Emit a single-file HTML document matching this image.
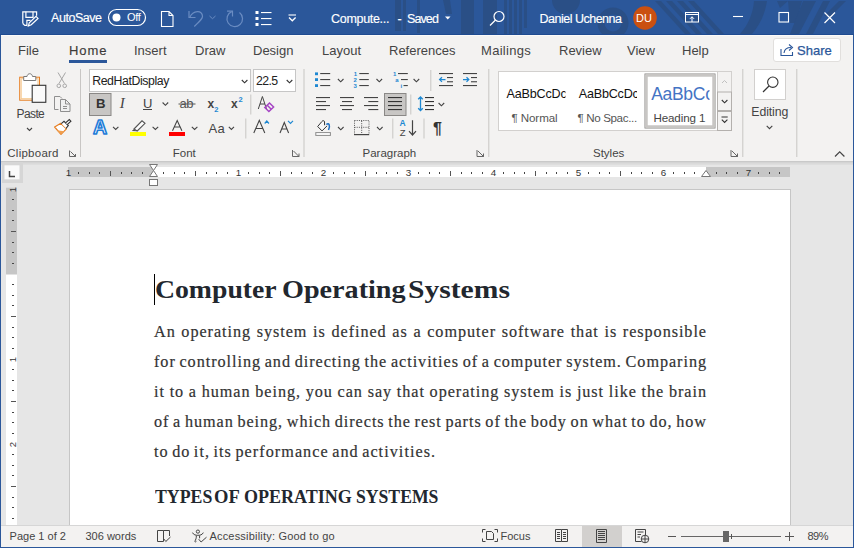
<!DOCTYPE html>
<html><head><meta charset="utf-8">
<style>
*{margin:0;padding:0;box-sizing:border-box}
html,body{width:854px;height:548px;overflow:hidden;background:#e6e6e6;font-family:"Liberation Sans",sans-serif;position:relative}
.a{position:absolute}
.t{position:absolute;white-space:nowrap;line-height:1}
#title{left:0;top:0;width:854px;height:35px;background:#2b579a}
#ribbon{left:0;top:35px;width:854px;height:126px;background:#f3f2f1}
.tab{position:absolute;top:44px;font-size:13px;color:#444;white-space:nowrap;line-height:1}
.sep{position:absolute;width:1px;background:#c8c6c4}
.glabel{position:absolute;top:148px;font-size:11.5px;color:#444;white-space:nowrap;line-height:1}
.chev{position:absolute}
svg{position:absolute;overflow:visible}
.doc{font-family:"Liberation Serif",serif;color:#333}
.bl{position:absolute;-webkit-text-stroke:0.2px #333;font-family:"Liberation Serif",serif;left:154px;width:553px;font-size:16.2px;letter-spacing:0.95px;word-spacing:-1.65px;text-align:justify;text-align-last:justify;white-space:nowrap;line-height:1;color:#333}
</style></head><body>

<!-- TITLE BAR -->
<div id="title" class="a"></div>
<svg class="a" style="left:0;top:0" width="854" height="35" viewBox="0 0 854 35">
 <g fill="#2a4f86">
  <rect x="395" y="0" width="6" height="31"/>
  <rect x="403" y="0" width="3" height="31"/>
  <rect x="417" y="0" width="3" height="33"/>
  <polygon points="443,0 450,0 452,14 446,14"/>
  <rect x="461" y="0" width="13" height="35"/>
  <rect x="483" y="0" width="14" height="35"/>
  <rect x="504" y="0" width="3" height="35"/>
  <rect x="509" y="0" width="3" height="35"/>
  <rect x="514" y="0" width="3" height="35"/>
  <rect x="519" y="0" width="3" height="35"/>
  <rect x="524" y="0" width="3" height="28"/>
  <path d="M552 0 A14 14 0 0 0 580 0 Z"/>
  <path fill-rule="evenodd" d="M597.5 23 A15.5 15.5 0 1 0 628.5 23 A15.5 15.5 0 1 0 597.5 23 Z M604.5 23 A8.5 8.5 0 1 0 621.5 23 A8.5 8.5 0 1 0 604.5 23 Z"/>
  <polygon points="655,1 661,1 691,34 685,34"/>
  <polygon points="666,1 672,1 702,34 696,34"/>
  <polygon points="677,1 683,1 713,34 707,34"/>
  <polygon points="688,1 694,1 724,34 718,34"/>
  <path d="M754 1 L767 1 C765 14 760 25 752 34 L740 34 C748 25 753 14 754 1 Z"/>
  <polygon points="777,1 788,1 780,8"/>
  <polygon points="788,1 802,1 796,23 790,23"/>
  <polygon points="803,1 816,1 799,34 790,34"/>
  <polygon points="823,1 830,1 813,34 806,34"/>
  <polygon points="839,1 846,1 831,16 824,16"/>
 </g>
 <rect x="0" y="34" width="854" height="1" fill="#1f4b90"/>
 <!-- save icon -->
 <g fill="none" stroke="#fff" stroke-width="1.2">
  <path d="M22.8 23.5 V11.8 H36.6 V15.8"/>
  <path d="M22.8 23.5 L24.8 25.4 H26.9 V20.4 H30.5"/>
  <path d="M25.9 11.8 V17.4 H33 V11.8"/>
  <path d="M28.4 25.9 L29.3 22.7 L36 16.4 L38 18.4 L31.3 24.8 Z"/>
 </g>
 <!-- toggle -->
 <rect x="108.5" y="9.5" width="37" height="16" rx="8" fill="none" stroke="#fff" stroke-width="1.2"/>
 <circle cx="116.5" cy="17.5" r="4" fill="#fff"/>
 <!-- new doc icon -->
 <path d="M161.5 11.5 H169 L173 15.5 V26.5 H161.5 Z M169 11.5 V15.5 H173" fill="none" stroke="#fff" stroke-width="1.1"/>
 <!-- undo (dim) -->
 <g fill="none" stroke="#6a8cc2" stroke-width="1.2">
  <path d="M189 11 V17.5 H195.5"/>
  <path d="M189.8 17.2 C193 10.5 202.5 9.5 202.5 16.5 C202.5 18.5 201 20 194.3 26.5"/>
  <path d="M209.5 16 L212.5 18.7 L215.5 16" stroke-width="1"/>
  <path d="M239.5 12.6 A7.8 7.8 0 1 1 231.7 11.6"/>
  <path d="M227 11.1 H232.5 V16.5"/>
 </g>
 <!-- list icon -->
 <g fill="#fff">
  <rect x="255.5" y="11" width="3" height="3"/>
  <rect x="255.5" y="17" width="3" height="3"/>
  <rect x="255.5" y="23" width="3" height="3"/>
  <rect x="261" y="12" width="10.5" height="1.1"/>
  <rect x="261" y="18" width="10.5" height="1.1"/>
  <rect x="261" y="24" width="10.5" height="1.1"/>
 </g>
 <!-- customize -->
 <path d="M288.5 15 H296" stroke="#fff" stroke-width="1.1"/>
 <path d="M289 17.5 L292.3 20.8 L295.6 17.5" fill="none" stroke="#fff" stroke-width="1.3"/>
 <!-- saved dropdown -->
 <path d="M445 16.5 L450.5 16.5 L447.75 19.5 Z" fill="#fff"/>
 <!-- search -->
 <circle cx="499" cy="16.5" r="5" fill="none" stroke="#fff" stroke-width="1.2"/>
 <path d="M495.5 20 L490 25.5" stroke="#fff" stroke-width="1.3"/>
 <!-- avatar -->
 <circle cx="645" cy="18" r="11.8" fill="#ca5010"/>
 <!-- ribbon display -->
 <g fill="none" stroke="#fff" stroke-width="1">
  <rect x="685.5" y="12.5" width="13" height="9.5"/>
  <path d="M685.5 14.5 H698.5"/>
  <path d="M692 22 V16.8 M690 18.8 L692 16.8 L694 18.8"/>
 </g>
 <!-- window controls -->
 <path d="M733 16.5 H743" stroke="#fff" stroke-width="1.1"/>
 <rect x="779" y="12.5" width="9.5" height="9.5" fill="none" stroke="#fff" stroke-width="1.1"/>
 <path d="M824.5 12.5 L835 23 M835 12.5 L824.5 23" stroke="#fff" stroke-width="1.2"/>
</svg>
<div class="t" style="left:51px;top:12.4px;font-size:12.5px;letter-spacing:-0.45px;color:#fff;-webkit-text-stroke:0.15px #fff">AutoSave</div>
<div class="t" style="left:127px;top:11.8px;font-size:11px;letter-spacing:-0.3px;color:#fff">Off</div>
<div class="t" style="left:331px;top:12.8px;font-size:12.5px;letter-spacing:-0.3px;color:#fff;-webkit-text-stroke:0.15px #fff">Compute...</div><div class="t" style="left:397.5px;top:12.8px;font-size:12.5px;color:#fff;-webkit-text-stroke:0.15px #fff">-</div><div class="t" style="left:407px;top:12.8px;font-size:12.5px;letter-spacing:-0.9px;color:#fff;-webkit-text-stroke:0.15px #fff">Saved</div>
<div class="t" style="left:539.5px;top:12.8px;font-size:12.5px;letter-spacing:-0.5px;color:#fff;-webkit-text-stroke:0.15px #fff">Daniel Uchenna</div>
<div class="t" style="left:636px;top:13px;font-size:11px;color:#fff">DU</div>


<!-- RIBBON -->
<div id="ribbon" class="a"></div>
<div class="a" style="left:1px;top:35px;width:852px;height:1px;background:#fbfaf9"></div>
<div class="tab" style="left:18px">File</div>
<div class="tab" style="left:69px;color:#3b3a39;letter-spacing:0.9px;-webkit-text-stroke:0.15px #3b3a39">Home</div>
<div class="a" style="left:69px;top:60px;width:38px;height:3px;background:#2b579a"></div>
<div class="tab" style="left:134px">Insert</div>
<div class="tab" style="left:195px">Draw</div>
<div class="tab" style="left:253px">Design</div>
<div class="tab" style="left:322px">Layout</div>
<div class="tab" style="left:389px">References</div>
<div class="tab" style="left:481px;letter-spacing:0.3px">Mailings</div>
<div class="tab" style="left:559px">Review</div>
<div class="tab" style="left:627px">View</div>
<div class="tab" style="left:682px">Help</div>
<div class="a" style="left:773px;top:38px;width:68px;height:24px;background:#fff;border:1px solid #e1dfdd;border-radius:3px"></div>
<div class="t" style="left:797px;top:44px;font-size:13px;color:#2b579a;-webkit-text-stroke:0.25px #2b579a">Share</div>
<svg style="left:0;top:0" width="854" height="548">
 <path d="M781 49 V55.5 H792.5 V52" fill="none" stroke="#2b579a" stroke-width="1.1"/>
 <path d="M784 53 C784.5 49 787 47.5 791 47.5" fill="none" stroke="#2b579a" stroke-width="1.1"/>
 <path d="M789 44.5 L792.5 47.5 L789 50.5" fill="none" stroke="#2b579a" stroke-width="1.1"/>
</svg>


<!-- CLIPBOARD GROUP -->
<svg style="left:0;top:0" width="854" height="548">
 <rect x="19.7" y="77.2" width="19.8" height="23" fill="#fdf6ec" stroke="#e67e22" stroke-width="1"/>
 <rect x="21.2" y="78.7" width="16.8" height="20" fill="#fff" stroke="#f6c88f" stroke-width="1"/>
 <path d="M23.7 80.5 V76.5 H27 C27.5 72.8 32 72.8 32.5 76.5 H35.8 V80.5 Z" fill="#fff" stroke="#7a7a7a" stroke-width="1"/>
 <rect x="32.2" y="85.3" width="13.6" height="17" fill="#fafafa" stroke="#333" stroke-width="1.1"/>
 <path d="M27 128 L29.5 130.5 L32 128" fill="none" stroke="#444" stroke-width="1.1"/>
 <g fill="none" stroke="#a6a6a6" stroke-width="1">
  <path d="M58 72.5 L64.5 83.5 M65.5 72.5 L59 83.5"/>
  <circle cx="58.8" cy="85.8" r="1.8"/><circle cx="64.7" cy="85.8" r="1.8"/>
  <path d="M58.5 109.5 H54.5 V96.5 H60 L62 98.5" stroke="#8f8f8f"/>
  <path d="M60.5 99.5 H65.5 L70 104 V111.5 H60.5 Z" fill="#f0f0f0" stroke="#8f8f8f"/>
  <path d="M65.5 99.5 V104 H70 M63 106.5 H67 M63 108.5 H67" stroke="#8f8f8f"/>
 </g>
 <path d="M54.6 127 L60.8 123.3 L66.4 128.9 L61 134.3 Z" fill="#fff" stroke="#e67e22" stroke-width="1.2" stroke-linejoin="round"/>
 <path d="M56.8 130.2 L61 134.3 L64.2 131.2 Z" fill="#f0a050"/>
 <path d="M61.3 123.6 L64 121.3 L68.3 125.6 L66 128.3" fill="#fff" stroke="#333" stroke-width="1.1"/>
 <path d="M65.6 122.8 L69.3 119.6 L70.9 121.2 L67.2 124.6" fill="#fff" stroke="#333" stroke-width="1.1"/>
 <path d="M69.5 150.5 V156.5 H75.5 M70.5 151.5 L75.5 156.5 M73 156.5 H75.5 V154" fill="none" stroke="#666" stroke-width="1"/>
 <rect x="80" y="69" width="1" height="88" fill="#c8c6c4"/>
</svg>
<div class="t" style="left:16.5px;top:107.8px;font-size:12px;letter-spacing:-0.6px;color:#444">Paste</div>
<div class="glabel" style="left:7.3px;letter-spacing:0.25px">Clipboard</div>

<!-- FONT GROUP -->
<svg style="left:0;top:0" width="854" height="548" font-family="Liberation Sans">
 <rect x="89.5" y="69.5" width="161" height="22" fill="#fff" stroke="#c6c6c6" stroke-width="1"/>
 <rect x="253.5" y="69.5" width="42" height="22" fill="#fff" stroke="#c6c6c6" stroke-width="1"/>
 <text x="92.2" y="85.3" font-size="12.3" fill="#222" letter-spacing="-0.4">RedHatDisplay</text>
 <text x="256" y="85.3" font-size="12.3" fill="#222" letter-spacing="-0.6">22.5</text>
 <g fill="none" stroke="#333" stroke-width="1.1">
  <path d="M241.8 80 L244.6 82.8 L247.4 80"/>
  <path d="M286.7 80 L289.5 82.8 L292.3 80"/>
 </g>
 <!-- row 2 -->
 <rect x="89.5" y="93.5" width="21.5" height="22" fill="#c8c6c4" stroke="#8a8886" stroke-width="1"/>
 <text x="96" y="107.8" font-size="13.2" font-weight="bold" fill="#333">B</text>
 <text x="119.8" y="108.2" font-size="15" font-style="italic" font-family="Liberation Serif" fill="#444">I</text>
 <text x="143" y="107.8" font-size="13" fill="#444">U</text>
 <rect x="143" y="109" width="9" height="1" fill="#444"/>
 <text x="179.5" y="107.8" font-size="13" fill="#555" letter-spacing="-0.5">ab</text>
 <rect x="178.5" y="103.5" width="17" height="1" fill="#555"/>
 <text x="207.5" y="107.8" font-size="12" font-weight="bold" fill="#444">x</text>
 <text x="214.3" y="111.8" font-size="7.5" font-weight="bold" fill="#1e88d2">2</text>
 <text x="231" y="107.8" font-size="12" font-weight="bold" fill="#444">x</text>
 <text x="238.5" y="101.6" font-size="7.5" font-weight="bold" fill="#1e88d2">2</text>
 <rect x="250.3" y="94.5" width="1" height="20" fill="#c8c6c4"/>
 <path d="M258.3 109 L262.4 96.5 L266.5 109 M260 104 H264.8" fill="none" stroke="#444" stroke-width="1"/>
 <path d="M264.8 107.5 L269.5 103 L273.6 107 L268.9 111.5 Z M267.2 105.3 L271.3 109.3" fill="none" stroke="#a544c4" stroke-width="1.5"/>
 <g fill="none" stroke="#444" stroke-width="1.1">
  <path d="M162.6 102.5 L165.4 105.3 L168.2 102.5"/>
  <path d="M113 126.8 L115.7 129.5 L118.4 126.8"/>
  <path d="M152.6 126.8 L155.4 129.5 L158.2 126.8"/>
  <path d="M191.8 126.8 L194.6 129.5 L197.4 126.8"/>
  <path d="M228.8 126.8 L231.4 129.4 L234 126.8"/>
 </g>
 <!-- row 3 -->
 <text x="93" y="134" font-size="19.5" font-weight="bold" fill="#fff" stroke="#1e7cd8" stroke-width="1.6" stroke-linejoin="round">A</text>
 <path d="M134 129 L142 120.8 L145 123.3 L137.2 131 Z" fill="#fff" stroke="#555" stroke-width="1.1"/>
 <path d="M131.8 131 L134 129 L136.8 131.2 Z" fill="#555"/>
 <rect x="130" y="132" width="16" height="4" fill="#ffff00"/>
 <path d="M172.5 130.8 L177.2 120.5 L181.9 130.8 M174.2 127 H180.2" fill="none" stroke="#444" stroke-width="1.1"/>
 <rect x="169" y="132" width="16" height="4" fill="#f00"/>
 <text x="208.5" y="133" font-size="13" fill="#444" letter-spacing="0.4">Aa</text>
 <rect x="245.3" y="118.5" width="1" height="20" fill="#c8c6c4"/>
 <path d="M253.8 133 L259.3 120.3 L264.8 133 M255.8 128.5 H262.8" fill="none" stroke="#444" stroke-width="1.1"/>
 <path d="M264.7 123.5 L266.8 121 L268.9 123.5" fill="none" stroke="#1e88d2" stroke-width="1.2"/>
 <path d="M280 133 L284.3 122.5 L288.6 133 M281.7 129 H287" fill="none" stroke="#444" stroke-width="1.1"/>
 <path d="M288 120.8 L290.5 123.3 L293 120.8" fill="none" stroke="#1e88d2" stroke-width="1.2"/>
 <path d="M292.5 150 V156.5 H299 M293.5 151 L299 156.5 M296.5 156.5 H299 V153.5" fill="none" stroke="#666" stroke-width="1"/>
 <rect x="303.5" y="69" width="1" height="88" fill="#c8c6c4"/>
</svg>
<div class="glabel" style="left:172.8px;">Font</div>

<!-- PARAGRAPH GROUP -->
<svg style="left:0;top:0" width="854" height="548" font-family="Liberation Sans">
 <g fill="#1e88d2">
  <rect x="315" y="72.4" width="3" height="2.8"/><rect x="315" y="78.2" width="3" height="2.8"/><rect x="315" y="84.2" width="3" height="2.8"/>
 </g>
 <g fill="#444">
  <rect x="320.2" y="73" width="10" height="1.1"/><rect x="320.2" y="79" width="10" height="1.1"/><rect x="320.2" y="85" width="10" height="1.1"/>
  <rect x="359.3" y="73" width="9.5" height="1.1"/><rect x="359.3" y="79" width="9.5" height="1.1"/><rect x="359.3" y="85" width="9.5" height="1.1"/>
  <rect x="398" y="73" width="9.8" height="1.1"/><rect x="401" y="79" width="6.8" height="1.1"/><rect x="403.5" y="85" width="4.3" height="1.1"/>
 </g>
 <g font-size="6" font-weight="bold" fill="#1e88d2">
  <text x="353.7" y="75.5">1</text><text x="353.5" y="81.5">2</text><text x="353.5" y="87.5">3</text>
  <text x="393" y="75.5">1</text><text x="395.2" y="82">a</text><text x="400.5" y="87.8">i</text>
 </g>
 <g fill="none" stroke="#444" stroke-width="1.1">
  <path d="M337.9 79 L340.7 81.8 L343.5 79"/>
  <path d="M376.5 79 L379.3 81.8 L382.1 79"/>
  <path d="M413.6 79 L416.4 81.8 L419.2 79"/>
  <path d="M438.6 103 L441.4 105.8 L444.2 103"/>
  <path d="M338 127 L340.8 129.8 L343.6 127"/>
  <path d="M377 127 L379.8 129.8 L382.6 127"/>
 </g>
 <rect x="430.3" y="70" width="1" height="21" fill="#c8c6c4"/>
 <g fill="#444">
  <rect x="439" y="73" width="14" height="1.1"/><rect x="447" y="77" width="6" height="1.1"/><rect x="447" y="81.2" width="6" height="1.1"/><rect x="439" y="85" width="14" height="1.1"/>
  <rect x="463" y="73" width="14" height="1.1"/><rect x="471" y="77" width="6" height="1.1"/><rect x="471" y="81.2" width="6" height="1.1"/><rect x="463" y="85" width="14" height="1.1"/>
 </g>
 <g fill="none" stroke="#1e88d2" stroke-width="1.3">
  <path d="M439.3 79.6 H445.5 M442 77.3 L439.6 79.6 L442 81.9"/>
  <path d="M463 79.6 H469 M466.5 77.3 L468.8 79.6 L466.5 81.9"/>
  <path d="M420.5 97 V110.5 M418.2 99.3 L420.5 97 L422.8 99.3 M418.2 108.2 L420.5 110.5 L422.8 108.2"/>
 </g>
 <!-- align row -->
 <g fill="#444">
  <rect x="316" y="97" width="14" height="1.1"/><rect x="316" y="101" width="10" height="1.1"/><rect x="316" y="105" width="14" height="1.1"/><rect x="316" y="109" width="10" height="1.1"/>
  <rect x="340" y="97" width="14" height="1.1"/><rect x="342" y="101" width="10" height="1.1"/><rect x="340" y="105" width="14" height="1.1"/><rect x="342" y="109" width="10" height="1.1"/>
  <rect x="364" y="97" width="14" height="1.1"/><rect x="368.3" y="101" width="10" height="1.1"/><rect x="364" y="105" width="14" height="1.1"/><rect x="368.3" y="109" width="10" height="1.1"/>
 </g>
 <rect x="384.5" y="93.5" width="21.5" height="22" fill="#c8c6c4" stroke="#8a8886" stroke-width="1"/>
 <g fill="#333">
  <rect x="388" y="97" width="14" height="1.1"/><rect x="388" y="101" width="14" height="1.1"/><rect x="388" y="105" width="14" height="1.1"/><rect x="388" y="109" width="14" height="1.1"/>
  <rect x="425" y="97" width="9" height="1.1"/><rect x="425" y="101" width="9" height="1.1"/><rect x="425" y="105" width="9" height="1.1"/><rect x="425" y="109" width="9" height="1.1"/>
 </g>
 <rect x="410.3" y="94.5" width="1" height="20" fill="#c8c6c4"/>
 <!-- row 3 -->
 <path d="M317.7 126.5 L321.8 121.6 C322.6 120.3 324.4 120.4 324.5 121.8 L324.6 125.2 M317.7 126.5 L322 130.9 L327 125.9 M321.8 121.6" fill="#fafafa" stroke="#333" stroke-width="1"/>
 <path d="M326.4 124.6 C328.8 122.3 330.6 125 328.5 130" fill="none" stroke="#1e6fc2" stroke-width="1.5"/>
 <rect x="315.8" y="132.6" width="14.6" height="2.8" fill="#fff" stroke="#8a8a8a" stroke-width="1"/>
 <g fill="#444">
  <rect x="354" y="134" width="15.2" height="1.2"/>
 </g>
 <path d="M354.5 120.5 H369 V134 M354.5 120.5 V134 M361.7 121 V134 M354.5 127.3 H369" fill="none" stroke="#555" stroke-width="1" stroke-dasharray="1 1.2"/>
 <rect x="392.3" y="118.5" width="1" height="20" fill="#c8c6c4"/>
 <text x="399.5" y="126.3" font-size="8.5" font-weight="bold" fill="#1e88d2">A</text>
 <text x="399.7" y="135.8" font-size="9.5" fill="#444">Z</text>
 <path d="M412.5 120.3 V135 M409 131.2 L412.5 135 L416 131.2" fill="none" stroke="#444" stroke-width="1.2"/>
 <rect x="423.5" y="118.5" width="1" height="20" fill="#c8c6c4"/>
 <text x="433" y="133.8" font-size="16" font-weight="bold" fill="#333">¶</text>
 <path d="M477 150 V156.5 H483.5 M478 151 L483.5 156.5 M480.5 156.5 H483.5 V153.5" fill="none" stroke="#666" stroke-width="1"/>
 <rect x="488.3" y="69" width="1" height="88" fill="#c8c6c4"/>
</svg>
<div class="glabel" style="left:362.5px;">Paragraph</div>

<!-- STYLES GROUP -->
<svg style="left:0;top:0" width="854" height="548" font-family="Liberation Sans">
 <rect x="498.5" y="71.5" width="233" height="59" fill="#fff" stroke="#d2d0ce" stroke-width="1"/>
 <rect x="717.5" y="71.5" width="14" height="59" fill="#f3f2f1" stroke="#d2d0ce" stroke-width="1"/>
 <rect x="717.5" y="92" width="14" height="18.5" fill="#f3f2f1" stroke="#b3b0ad" stroke-width="1"/>
 <rect x="717.5" y="111.5" width="14" height="19" fill="#f3f2f1" stroke="#b3b0ad" stroke-width="1"/>
 <path d="M722 83 L724.5 80.5 L727 83" fill="none" stroke="#c0c0c0" stroke-width="1"/>
 <path d="M721.8 100 L724.6 102.8 L727.4 100" fill="none" stroke="#333" stroke-width="1.1"/>
 <path d="M721.5 117 H727.7 M721.8 119.6 L724.6 122.4 L727.4 119.6" fill="none" stroke="#333" stroke-width="1.1"/>
 <rect x="645" y="74" width="70" height="54" fill="#fff" stroke="#8a8886" stroke-width="1"/>
 <rect x="646.5" y="75.5" width="67" height="51" fill="none" stroke="#c8c6c4" stroke-width="2.5"/>
 <svg x="498" y="72" width="67.5" height="40" style="overflow:hidden"><text x="8.6" y="26.1" font-size="12.6" fill="#111" letter-spacing="-0.2">AaBbCcDc</text></svg>
 <svg x="570" y="72" width="67" height="40" style="overflow:hidden"><text x="8.7" y="26.1" font-size="12.6" fill="#111" letter-spacing="-0.2">AaBbCcDc</text></svg>
 <svg x="648" y="77" width="61.5" height="30" style="overflow:hidden"><text x="3.2" y="22.8" font-size="17.5" fill="#4474c4" letter-spacing="-0.3">AaBbCc</text></svg>
 <text x="511.5" y="121.9" font-size="11.6" fill="#555" letter-spacing="-0.1">¶ Normal</text>
 <text x="577.4" y="121.9" font-size="11.6" fill="#555" letter-spacing="-0.35">¶ No Spac...</text>
 <text x="653.4" y="121.9" font-size="11.6" fill="#444" letter-spacing="-0.1">Heading 1</text>
 <path d="M731 150 V156.5 H737.5 M732 151 L737.5 156.5 M734.5 156.5 H737.5 V153.5" fill="none" stroke="#666" stroke-width="1"/>
 <rect x="742.3" y="69" width="1" height="88" fill="#c8c6c4"/>
 <!-- editing -->
 <rect x="754.5" y="69.5" width="31" height="30" fill="#fff" stroke="#d2d0ce" stroke-width="1"/>
 <circle cx="772.8" cy="82.2" r="5.2" fill="none" stroke="#333" stroke-width="1.1"/>
 <path d="M769 86 L763 92" stroke="#333" stroke-width="1.2"/>
 <path d="M766.7 125.8 L769.5 128.6 L772.3 125.8" fill="none" stroke="#444" stroke-width="1.1"/>
 <rect x="796.3" y="69" width="1" height="88" fill="#c8c6c4"/>
 <path d="M835 156.5 L839.7 151.8 L844.4 156.5" fill="none" stroke="#444" stroke-width="1.2"/>
</svg>
<div class="glabel" style="left:593px;">Styles</div>
<div class="t" style="left:751.3px;top:105.5px;font-size:12.3px;color:#444;letter-spacing:-0.1px">Editing</div>

<!-- RULER AREA -->
<svg style="left:0;top:0" width="854" height="548" font-family="Liberation Sans">
 <rect x="0" y="161" width="854" height="1" fill="#c9c9c9"/>
 <rect x="0" y="162" width="854" height="1" fill="#d4d4d4"/>
 <rect x="0" y="163" width="854" height="1" fill="#dadada"/>
 <rect x="0" y="164" width="854" height="1" fill="#dedede"/>
 <rect x="68" y="167" width="722" height="10" fill="#c6c6c6"/>
 <rect x="153.5" y="167" width="552.5" height="10" fill="#fff"/>
 <rect x="78" y="172" width="1" height="2" fill="#444"/>
 <rect x="89" y="172" width="1" height="2" fill="#444"/>
 <rect x="99" y="172" width="1" height="2" fill="#444"/>
 <rect x="110" y="171" width="1" height="5" fill="#555"/>
 <rect x="121" y="172" width="1" height="2" fill="#444"/>
 <rect x="131" y="172" width="1" height="2" fill="#444"/>
 <rect x="142" y="172" width="1" height="2" fill="#444"/>
 <rect x="163" y="172" width="1" height="2" fill="#444"/>
 <rect x="174" y="172" width="1" height="2" fill="#444"/>
 <rect x="184" y="172" width="1" height="2" fill="#444"/>
 <rect x="195" y="171" width="1" height="5" fill="#555"/>
 <rect x="206" y="172" width="1" height="2" fill="#444"/>
 <rect x="216" y="172" width="1" height="2" fill="#444"/>
 <rect x="227" y="172" width="1" height="2" fill="#444"/>
 <rect x="248" y="172" width="1" height="2" fill="#444"/>
 <rect x="259" y="172" width="1" height="2" fill="#444"/>
 <rect x="269" y="172" width="1" height="2" fill="#444"/>
 <rect x="280" y="171" width="1" height="5" fill="#555"/>
 <rect x="291" y="172" width="1" height="2" fill="#444"/>
 <rect x="301" y="172" width="1" height="2" fill="#444"/>
 <rect x="312" y="172" width="1" height="2" fill="#444"/>
 <rect x="333" y="172" width="1" height="2" fill="#444"/>
 <rect x="344" y="172" width="1" height="2" fill="#444"/>
 <rect x="354" y="172" width="1" height="2" fill="#444"/>
 <rect x="365" y="171" width="1" height="5" fill="#555"/>
 <rect x="376" y="172" width="1" height="2" fill="#444"/>
 <rect x="386" y="172" width="1" height="2" fill="#444"/>
 <rect x="397" y="172" width="1" height="2" fill="#444"/>
 <rect x="418" y="172" width="1" height="2" fill="#444"/>
 <rect x="429" y="172" width="1" height="2" fill="#444"/>
 <rect x="439" y="172" width="1" height="2" fill="#444"/>
 <rect x="450" y="171" width="1" height="5" fill="#555"/>
 <rect x="461" y="172" width="1" height="2" fill="#444"/>
 <rect x="471" y="172" width="1" height="2" fill="#444"/>
 <rect x="482" y="172" width="1" height="2" fill="#444"/>
 <rect x="503" y="172" width="1" height="2" fill="#444"/>
 <rect x="514" y="172" width="1" height="2" fill="#444"/>
 <rect x="524" y="172" width="1" height="2" fill="#444"/>
 <rect x="535" y="171" width="1" height="5" fill="#555"/>
 <rect x="546" y="172" width="1" height="2" fill="#444"/>
 <rect x="556" y="172" width="1" height="2" fill="#444"/>
 <rect x="567" y="172" width="1" height="2" fill="#444"/>
 <rect x="588" y="172" width="1" height="2" fill="#444"/>
 <rect x="599" y="172" width="1" height="2" fill="#444"/>
 <rect x="609" y="172" width="1" height="2" fill="#444"/>
 <rect x="620" y="171" width="1" height="5" fill="#555"/>
 <rect x="631" y="172" width="1" height="2" fill="#444"/>
 <rect x="641" y="172" width="1" height="2" fill="#444"/>
 <rect x="652" y="172" width="1" height="2" fill="#444"/>
 <rect x="673" y="172" width="1" height="2" fill="#444"/>
 <rect x="684" y="172" width="1" height="2" fill="#444"/>
 <rect x="694" y="172" width="1" height="2" fill="#444"/>
 <rect x="705" y="171" width="1" height="5" fill="#555"/>
 <rect x="716" y="172" width="1" height="2" fill="#444"/>
 <rect x="726" y="172" width="1" height="2" fill="#444"/>
 <rect x="737" y="172" width="1" height="2" fill="#444"/>
 <rect x="758" y="172" width="1" height="2" fill="#444"/>
 <rect x="769" y="172" width="1" height="2" fill="#444"/>
 <rect x="779" y="172" width="1" height="2" fill="#444"/>
 <text x="68.5" y="176" font-size="9.8" fill="#333" text-anchor="middle">1</text>
 <text x="238.5" y="176" font-size="9.8" fill="#333" text-anchor="middle">1</text>
 <text x="323.5" y="176" font-size="9.8" fill="#333" text-anchor="middle">2</text>
 <text x="408.5" y="176" font-size="9.8" fill="#333" text-anchor="middle">3</text>
 <text x="493.5" y="176" font-size="9.8" fill="#333" text-anchor="middle">4</text>
 <text x="578.5" y="176" font-size="9.8" fill="#333" text-anchor="middle">5</text>
 <text x="663.5" y="176" font-size="9.8" fill="#333" text-anchor="middle">6</text>
 <text x="748.5" y="176" font-size="9.8" fill="#333" text-anchor="middle">7</text>
 <path d="M149.5 164.5 H157.5 L153.5 170.5 Z M149.5 176.5 H157.5 L153.5 170.5 Z" fill="#fff" stroke="#777" stroke-width="1"/>
 <rect x="149.5" y="179.5" width="8" height="6" fill="#fff" stroke="#777" stroke-width="1"/>
 <path d="M701.5 176.5 H710.5 L706 170.5 Z" fill="#fff" stroke="#777" stroke-width="1"/>
 <!-- tab selector -->
 <rect x="2" y="162" width="21" height="21" fill="#d6d6d6"/>
 <rect x="4.5" y="165.3" width="15" height="14" fill="#fafafa"/>
 <path d="M9.5 171 V176.5 H15" fill="none" stroke="#444" stroke-width="1.5"/>
 <!-- vertical ruler -->
 <rect x="6" y="187.5" width="11" height="338" fill="#fff"/>
 <rect x="6" y="187.5" width="11" height="87" fill="#c6c6c6"/>
 <rect x="12" y="199" width="2" height="1" fill="#444"/>
 <rect x="12" y="210" width="2" height="1" fill="#444"/>
 <rect x="12" y="220" width="2" height="1" fill="#444"/>
 <rect x="11" y="231" width="5" height="1" fill="#555"/>
 <rect x="12" y="242" width="2" height="1" fill="#444"/>
 <rect x="12" y="252" width="2" height="1" fill="#444"/>
 <rect x="12" y="263" width="2" height="1" fill="#444"/>
 <rect x="12" y="284" width="2" height="1" fill="#444"/>
 <rect x="12" y="295" width="2" height="1" fill="#444"/>
 <rect x="12" y="305" width="2" height="1" fill="#444"/>
 <rect x="11" y="316" width="5" height="1" fill="#555"/>
 <rect x="12" y="327" width="2" height="1" fill="#444"/>
 <rect x="12" y="337" width="2" height="1" fill="#444"/>
 <rect x="12" y="348" width="2" height="1" fill="#444"/>
 <rect x="12" y="369" width="2" height="1" fill="#444"/>
 <rect x="12" y="380" width="2" height="1" fill="#444"/>
 <rect x="12" y="390" width="2" height="1" fill="#444"/>
 <rect x="11" y="401" width="5" height="1" fill="#555"/>
 <rect x="12" y="412" width="2" height="1" fill="#444"/>
 <rect x="12" y="422" width="2" height="1" fill="#444"/>
 <rect x="12" y="433" width="2" height="1" fill="#444"/>
 <rect x="12" y="454" width="2" height="1" fill="#444"/>
 <rect x="12" y="465" width="2" height="1" fill="#444"/>
 <rect x="12" y="475" width="2" height="1" fill="#444"/>
 <rect x="11" y="486" width="5" height="1" fill="#555"/>
 <rect x="12" y="497" width="2" height="1" fill="#444"/>
 <rect x="12" y="507" width="2" height="1" fill="#444"/>
 <rect x="12" y="518" width="2" height="1" fill="#444"/>
 <text x="0" y="0" font-size="9.5" fill="#333" text-anchor="middle" transform="translate(15.5 189.5) rotate(-90)">1</text>
 <text x="0" y="0" font-size="9.5" fill="#333" text-anchor="middle" transform="translate(15.5 359.5) rotate(-90)">1</text>
 <text x="0" y="0" font-size="9.5" fill="#333" text-anchor="middle" transform="translate(15.5 444.5) rotate(-90)">2</text>
</svg>

<!-- PAGE -->
<div class="a" style="left:69px;top:189px;width:722px;height:400px;background:#fff;border:1px solid #c6c6c6"></div>

<!-- DOC TEXT -->
<div class="a" style="left:154px;top:274px;width:1px;height:31px;background:#000"></div>
<div class="t doc" style="left:155.1px;top:276.8px;font-size:26px;font-weight:bold;color:#22272e;transform-origin:0 0;transform:scaleX(1.066)">Computer</div><div class="t doc" style="left:282.1px;top:276.8px;font-size:26px;font-weight:bold;color:#22272e;transform-origin:0 0;transform:scaleX(1.083)">Operating</div><div class="t doc" style="left:407.6px;top:276.8px;font-size:26px;font-weight:bold;color:#22272e;transform-origin:0 0;transform:scaleX(1.138)">Systems</div>
<div class="bl" style="top:324px">An operating system is defined as a computer software that is responsible</div>
<div class="bl" style="top:354px">for controlling and directing the activities of a computer system. Comparing</div>
<div class="bl" style="top:384px">it to a human being, you can say that operating system is just like the brain</div>
<div class="bl" style="top:414px">of a human being, which directs the rest parts of the body on what to do, how</div>
<div class="bl" style="top:444px;text-align-last:left;text-align:left;letter-spacing:1.05px">to do it, its performance and activities.</div>
<div class="t doc" style="left:154.8px;top:487.2px;font-size:19.5px;font-weight:bold;color:#22272e;transform-origin:0 0;transform:scaleX(0.912)">TYPES</div><div class="t doc" style="left:214px;top:487.2px;font-size:19.5px;font-weight:bold;color:#22272e;transform-origin:0 0;transform:scaleX(0.95)">OF</div><div class="t doc" style="left:244.4px;top:487.2px;font-size:19.5px;font-weight:bold;color:#22272e;transform-origin:0 0;transform:scaleX(0.925)">OPERATING</div><div class="t doc" style="left:356.2px;top:487.2px;font-size:19.5px;font-weight:bold;color:#22272e;transform-origin:0 0;transform:scaleX(0.905)">SYSTEMS</div>


<!-- STATUS BAR -->
<div class="a" style="left:0;top:525px;width:854px;height:23px;background:#f3f2f1;border-top:1px solid #d6d6d6"></div>
<div class="a" style="left:582px;top:526px;width:40px;height:21px;background:#d2d0ce"></div>
<div class="t" style="left:9.6px;top:530.5px;font-size:11px;color:#444">Page 1 of 2</div>
<div class="t" style="left:85.5px;top:530.5px;font-size:11px;color:#444">306 words</div>
<div class="t" style="left:209.4px;top:530.5px;font-size:11px;letter-spacing:0.2px;color:#444">Accessibility: Good to go</div>
<div class="t" style="left:500.5px;top:531.2px;font-size:11px;color:#444">Focus</div>
<div class="t" style="left:807.4px;top:530.5px;font-size:11px;letter-spacing:-0.4px;color:#444">89%</div>
<svg style="left:0;top:0" width="854" height="548">
 <g fill="none" stroke="#444" stroke-width="1">
  <path d="M157.5 530.5 H163.5 V541.5 H157.5 Z M163.5 530.5 H169.5 V536 M163.5 538.5 L165.8 541.5 L170.5 537"/>
  <circle cx="197.9" cy="531.6" r="1.6"/>
  <path d="M192.5 532.6 C193.5 535 196 535.3 197.9 535.3 C199.8 535.3 202.3 535 203.3 532.6"/>
  <path d="M196.3 535.5 C196.6 538 195.6 540 194.8 541.3 C195 542.2 196 542 196.4 541.4"/>
  <path d="M199.6 535.5 V538.3"/>
  <path d="M198.7 539.2 L201.1 542 L206.5 537.2"/>
  <path d="M482.5 532.5 V529.5 H485.5 M494.5 529.5 H497.5 V532.5 M497.5 538.5 V541.5 H494.5 M485.5 541.5 H482.5 V538.5"/>
  <path d="M486.5 531.5 H491.5 L493.5 533.5 V539.5 H486.5 Z"/>
  <path d="M555.5 529.5 H561.5 V541.5 H555.5 Z M561.5 529.5 H567.5 V541.5 H561.5 M557 532.5 H560 M557 534.5 H560 M557 536.5 H560 M557 538.5 H560 M563 532.5 H566 M563 534.5 H566 M563 536.5 H566 M563 538.5 H566"/>
  <path d="M596.5 529.5 H606.5 V542.5 H596.5 Z M598 531.5 H605 M598 533.5 H605 M598 535.5 H605 M598 537.5 H605 M598 539.5 H605"/>
  <path d="M641.5 541.5 H635.5 V529.5 H645.5 V535 M637.5 532 H643.5 M637.5 534.5 H641 M637.5 537 H640"/>
  <circle cx="645" cy="539" r="3.8" fill="#f3f2f1"/>
  <path d="M641.2 539 H648.8 M645 535.2 V542.8"/>
 </g>
 <rect x="668" y="536" width="8" height="1" fill="#555"/>
 <rect x="681" y="536" width="100" height="1" fill="#666"/>
 <rect x="723" y="531" width="6" height="11" fill="#666"/>
 <rect x="731" y="534" width="1" height="5" fill="#555"/>
 <rect x="785" y="536" width="9" height="1" fill="#555"/>
 <rect x="789" y="532" width="1" height="9" fill="#555"/>
 <rect x="0" y="35" width="1" height="513" fill="#2b579a"/>
 <rect x="853" y="35" width="1" height="513" fill="#2b579a"/>
 <rect x="0" y="547" width="854" height="1" fill="#2b579a"/>
</svg>

</body></html>
